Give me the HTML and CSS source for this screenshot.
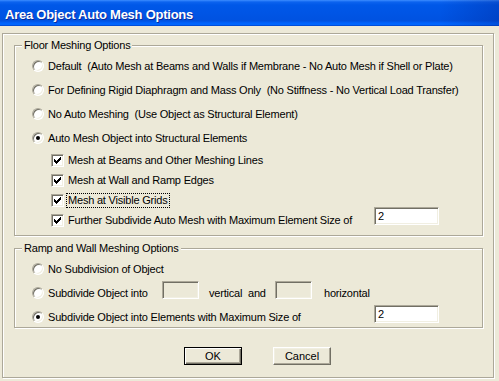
FILE: index.html
```html
<!DOCTYPE html>
<html lang="en">
<head>
    <meta charset="UTF-8">
    <title>Area Object Auto Mesh Options</title>
    <link rel="stylesheet" href="styles.css">
</head>
<body>
    <div class="window">
        <div class="titlebar">
            <span class="title">Area Object Auto Mesh Options</span>
        </div>

        <div class="frame">
            <!-- Floor options -->
            <div class="group group-floor">
                <span class="legend">Floor Meshing Options</span>

                <div class="row radio-row">
                    <span class="radio"></span>
                    <span>Default&nbsp; (Auto Mesh at Beams and Walls if Membrane - No Auto Mesh if Shell or Plate)</span>
                </div>
                <div class="row radio-row">
                    <span class="radio"></span>
                    <span>For Defining Rigid Diaphragm and Mass Only&nbsp; (No Stiffness - No Vertical Load Transfer)</span>
                </div>
                <div class="row radio-row">
                    <span class="radio"></span>
                    <span>No Auto Meshing&nbsp; (Use Object as Structural Element)</span>
                </div>
                <div class="row radio-row">
                    <span class="radio checked"></span>
                    <span>Auto Mesh Object into Structural Elements</span>
                </div>

                <div class="row check-row">
                    <span class="check"><svg width="9" height="9" viewBox="0 0 9 9" shape-rendering="crispEdges"><path d="M1 3h1v3h-1z M2 4h1v3h-1z M3 5h1v3h-1z M4 4h1v3h-1z M5 3h1v3h-1z M6 2h1v3h-1z M7 1h1v3h-1z" fill="#000"/></svg></span>
                    <span>Mesh at Beams and Other Meshing Lines</span>
                </div>
                <div class="row check-row">
                    <span class="check"><svg width="9" height="9" viewBox="0 0 9 9" shape-rendering="crispEdges"><path d="M1 3h1v3h-1z M2 4h1v3h-1z M3 5h1v3h-1z M4 4h1v3h-1z M5 3h1v3h-1z M6 2h1v3h-1z M7 1h1v3h-1z" fill="#000"/></svg></span>
                    <span>Mesh at Wall and Ramp Edges</span>
                </div>
                <div class="row check-row">
                    <span class="check focus-check"><svg width="9" height="9" viewBox="0 0 9 9" shape-rendering="crispEdges"><path d="M1 3h1v3h-1z M2 4h1v3h-1z M3 5h1v3h-1z M4 4h1v3h-1z M5 3h1v3h-1z M6 2h1v3h-1z M7 1h1v3h-1z" fill="#000"/></svg></span>
                    <span class="focus">Mesh at Visible Grids</span>
                </div>
                <div class="row check-row">
                    <span class="check"><svg width="9" height="9" viewBox="0 0 9 9" shape-rendering="crispEdges"><path d="M1 3h1v3h-1z M2 4h1v3h-1z M3 5h1v3h-1z M4 4h1v3h-1z M5 3h1v3h-1z M6 2h1v3h-1z M7 1h1v3h-1z" fill="#000"/></svg></span>
                    <span>Further Subdivide Auto Mesh with Maximum Element Size of</span>
                    <span class="textbox size-box">2</span>
                </div>
            </div>

            <!-- Ramp and wall options -->
            <div class="group group-ramp">
                <span class="legend">Ramp and Wall Meshing Options</span>

                <div class="row radio-row">
                    <span class="radio"></span>
                    <span>No Subdivision of Object</span>
                </div>
                <div class="row radio-row">
                    <span class="radio"></span>
                    <span class="lbl-into">Subdivide Object into</span>
                    <span class="textbox small-box disabled"></span>
                    <span class="lbl-vertical">vertical</span>
                    <span class="lbl-and">and</span>
                    <span class="textbox small-box disabled"></span>
                    <span class="lbl-horizontal">horizontal</span>
                </div>
                <div class="row radio-row">
                    <span class="radio checked"></span>
                    <span>Subdivide Object into Elements with Maximum Size of</span>
                    <span class="textbox size-box">2</span>
                </div>
            </div>

            <div class="buttons">
                <button class="btn btn-default">OK</button>
                <button class="btn">Cancel</button>
            </div>
        </div>
    </div>
</body>
</html>
```

FILE: styles.css
```css
/* Classic dialog look */
* {
    margin: 0;
    padding: 0;
    box-sizing: border-box;
}

body {
    font-family: "Liberation Sans", Arial, sans-serif;
    font-size: 11px;
    letter-spacing: -0.2px;
    color: #000;
    background-color: #ece9d8;
}

.window {
    width: 499px;
    height: 381px;
    background-color: #ece9d8;
    display: flex;
    flex-direction: column;
}

/* Title bar */
.titlebar {
    height: 26px;
    padding: 3px 0 0 5px;
    display: flex;
    align-items: center;
    background:
        linear-gradient(to right, rgba(0, 0, 0, 0) 88%, rgba(0, 20, 120, 0.25) 100%),
        linear-gradient(to bottom, #3d8dff 0, #0c63ef 2px, #0058e8 5px, #0055e5 50%, #0052e0 80%, #0062fa 88%, #0068ff 94%, #0042c8 100%);
}

.title {
    color: #fff;
    font-weight: bold;
    font-size: 13px;
    letter-spacing: -0.25px;
    text-shadow: 1px 1px 0 #0a2a9c;
}

/* Etched outer frame */
.frame {
    margin: 7px 5px 0 2px;
    height: 345px;
    border: 1px solid #aca899;
    box-shadow: inset 1px 1px 0 #fff, 1px 1px 0 #fff;
    padding: 11px 9px 0 11px;
}

/* Group boxes */
.group {
    position: relative;
    width: 469px;
    border: 1px solid #aca899;
    box-shadow: inset 1px 1px 0 #fff, 1px 1px 0 #fff;
    padding: 8px 0 0 17px;
}

.group-floor {
    height: 191px;
}

.group-ramp {
    height: 80px;
    margin-top: 12px;
}

.legend {
    position: absolute;
    top: -7px;
    left: 7px;
    padding: 0 2px;
    line-height: 13px;
    background-color: #ece9d8;
}

.row {
    display: flex;
    align-items: center;
    white-space: nowrap;
}

.radio-row {
    height: 24px;
}

.check-row {
    height: 20px;
    padding-left: 19px;
}

/* Radio buttons */
.radio {
    width: 12px;
    height: 12px;
    margin-right: 4px;
    flex-shrink: 0;
    border-radius: 50%;
    background-color: #fff;
    border: 1px solid;
    border-color: #aca899 #fff #fff #aca899;
    box-shadow: inset 1px 1px 0 #716f64, inset -1px -1px 0 #f1efe2;
    display: flex;
    align-items: center;
    justify-content: center;
}

.radio.checked::after {
    content: "";
    width: 4px;
    height: 4px;
    border-radius: 50%;
    background-color: #000;
}

/* Check boxes */
.check {
    width: 13px;
    height: 13px;
    margin-right: 4px;
    flex-shrink: 0;
    background-color: #fff;
    border: 1px solid;
    border-color: #aca899 #fff #fff #aca899;
    box-shadow: inset 1px 1px 0 #716f64, inset -1px -1px 0 #f1efe2;
    padding: 1px;
    display: flex;
}

.check svg {
    display: block;
}

.focus-check {
    margin-right: 2px;
}

.focus {
    border: 1px dotted #000;
    padding: 0 1px;
    line-height: 13px;
}

/* Edit boxes */
.textbox {
    display: block;
    height: 18px;
    background-color: #fff;
    border: 1px solid;
    border-color: #aca899 #fff #fff #aca899;
    box-shadow: inset 1px 1px 0 #716f64, inset -1px -1px 0 #f1efe2;
    padding: 1px 0 0 3px;
    line-height: 14px;
}

.textbox.disabled {
    background-color: #ece9d8;
}

.size-box {
    width: 65px;
    margin-left: auto;
    margin-right: 43px;
}

.check-row .size-box {
    margin-bottom: 8px;
}

.radio-row .textbox {
    margin-bottom: 6px;
}

.small-box {
    width: 37px;
}

.lbl-into {
    width: 114px;
}

.lbl-vertical {
    width: 39px;
    margin-left: 10px;
}

.lbl-and {
    width: 27px;
}

.lbl-horizontal {
    margin-left: 12px;
}

/* Buttons */
.buttons {
    display: flex;
    gap: 31px;
    margin-top: 19px;
    padding-left: 170px;
}

.btn {
    width: 58px;
    height: 18px;
    font-family: "Liberation Sans", Arial, sans-serif;
    font-size: 11px;
    color: #000;
    background-color: #ece9d8;
    border: 1px solid;
    border-color: #fff #716f64 #716f64 #fff;
    box-shadow: inset -1px -1px 0 #aca899, inset 1px 1px 0 #f1efe2;
}

.btn-default {
    border-color: #000;
    box-shadow: inset 1px 1px 0 #fff, inset -1px -1px 0 #716f64, inset -2px -2px 0 #aca899;
}
```
